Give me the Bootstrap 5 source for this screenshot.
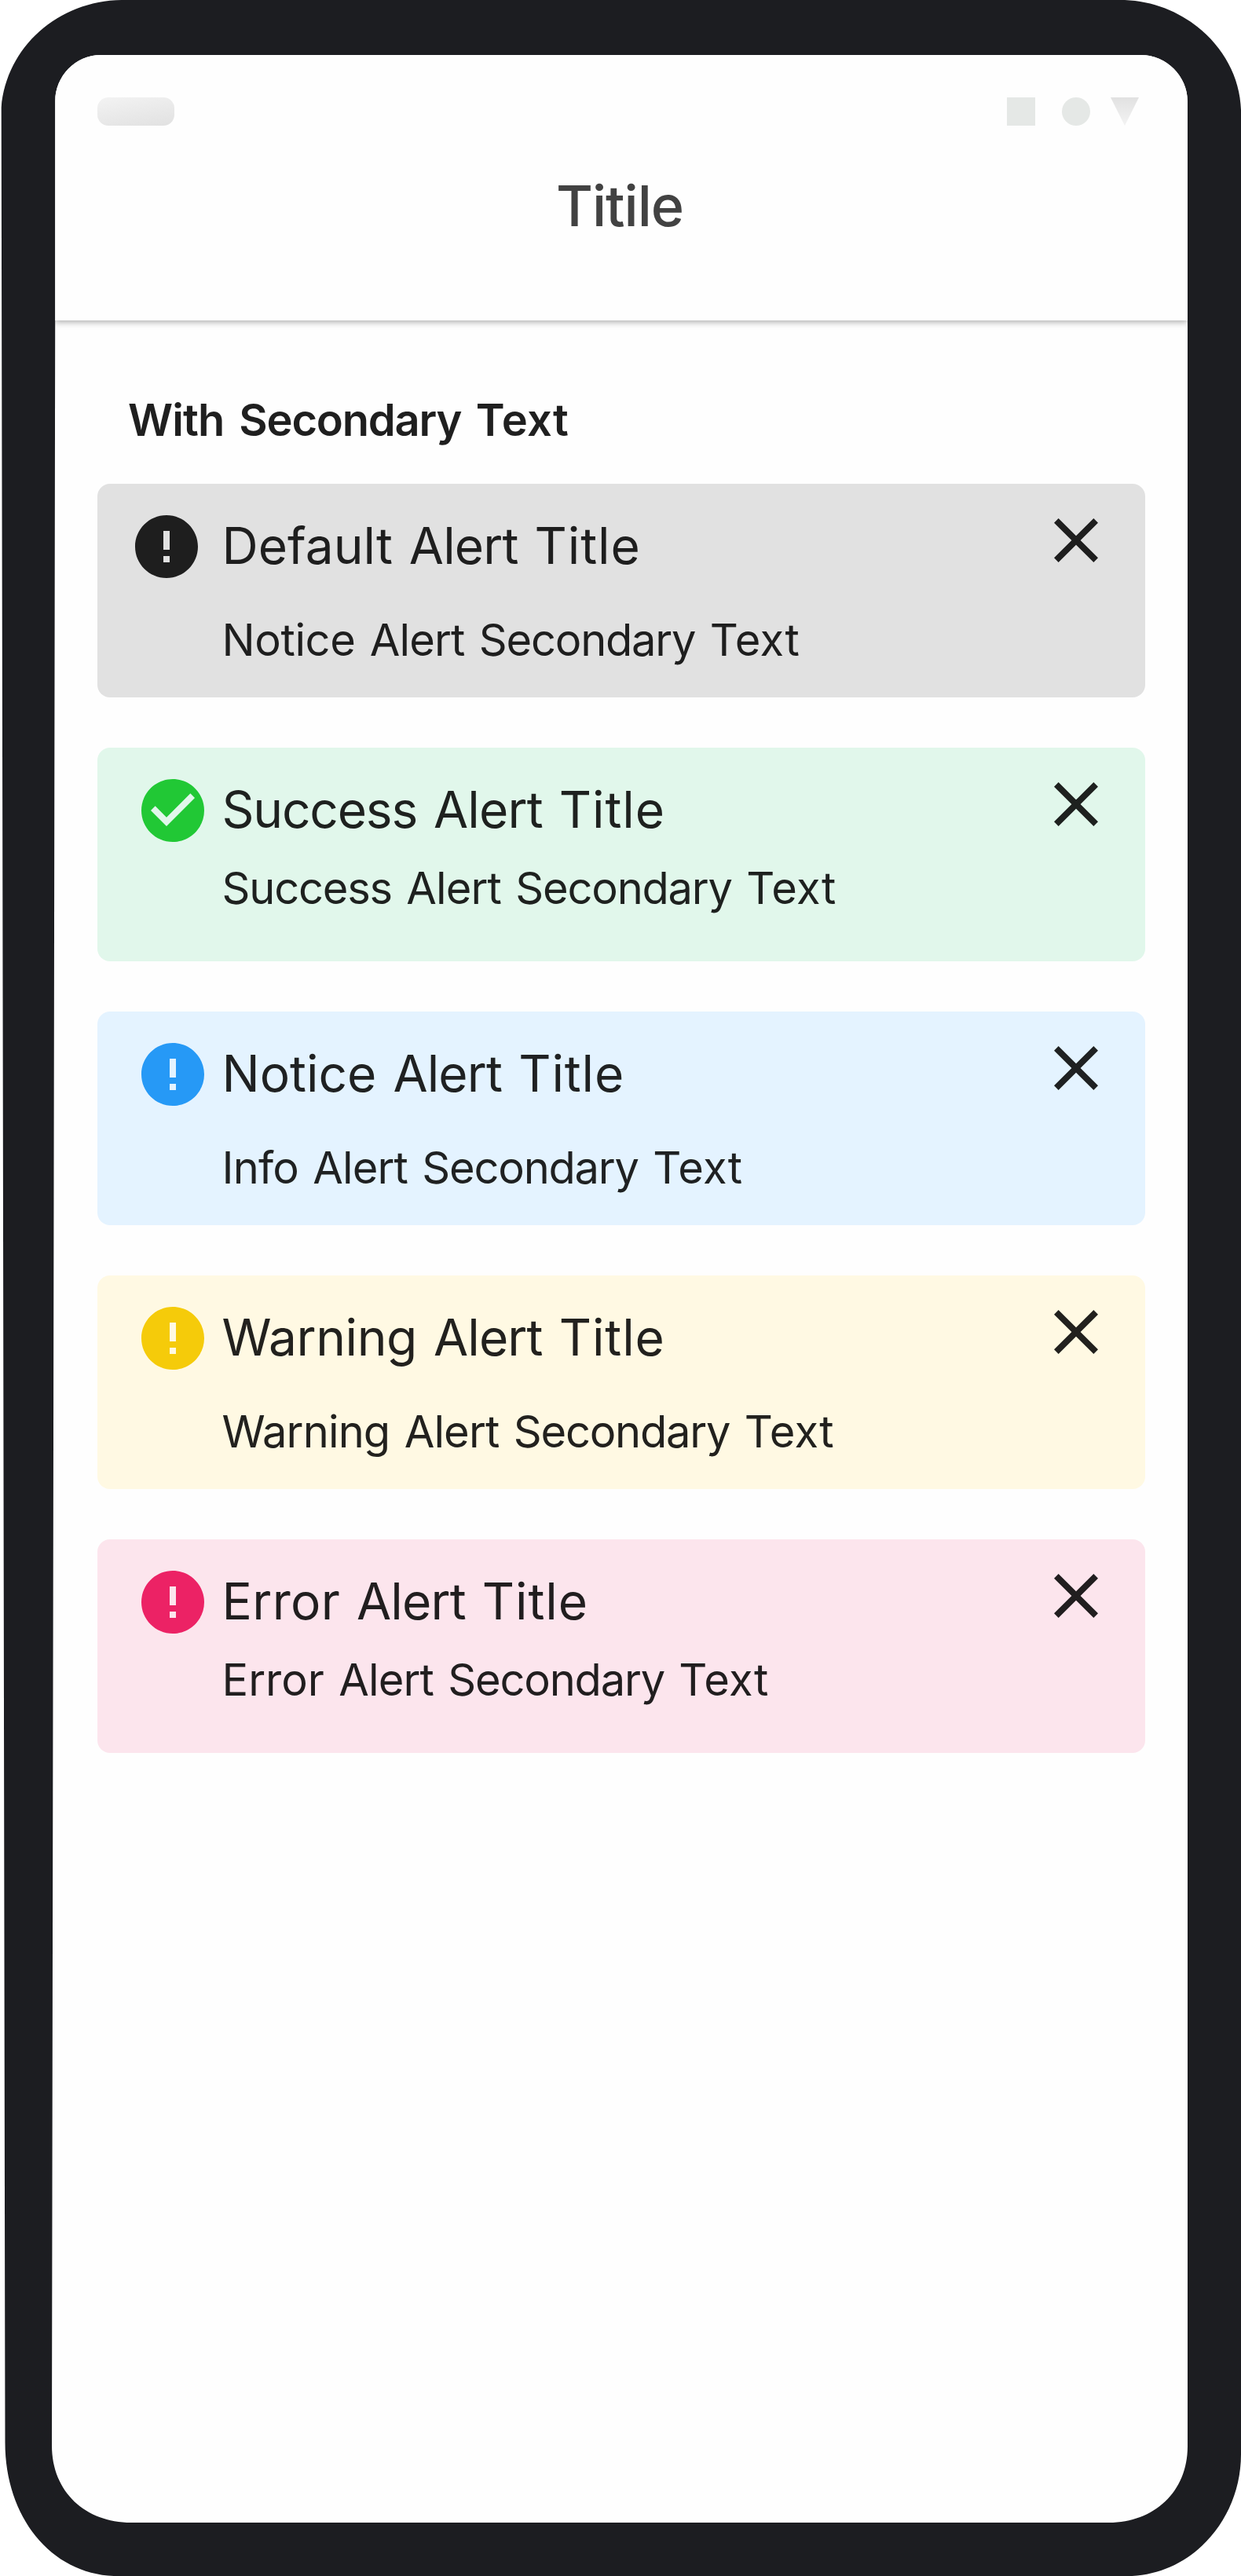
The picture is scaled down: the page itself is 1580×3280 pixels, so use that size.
<!DOCTYPE html>
<html lang="en">
<head>
<meta charset="utf-8">
<meta name="viewport" content="width=device-width, initial-scale=1">
<title>Titile</title>
<link href="https://cdn.jsdelivr.net/npm/bootstrap@5.3.0/dist/css/bootstrap.min.css" rel="stylesheet">
<style>
  body { font-family: Inter, "Liberation Sans", sans-serif; background: #fff; }
  /* device body, its outline leans slightly inwards on the left */
  .device {
    width: 1580px; height: 3280px; padding: 70px 68px 68px 66px; background: #1c1d21;
    clip-path: path("M155 0H1432C1512 3 1578 66 1580 140V3125C1580 3210 1515 3280 1435 3280H145C65 3277 6.500 3205 6.500 3110L1.700 137C8 60 74 1 155 0Z");
  }
  .device-screen {
    background: #fefefe;
    clip-path: path("M62 0H1387C1419 0 1446 27 1446 59V3045C1446 3103 1403 3142 1346 3142H101C43 3142 0 3103 0 3044L4.200 340V59C4.200 27 30 0 62 0Z");
  }
  .app-header {
    height: 338px; margin-left: 4px; padding: 54px 62px 0 54px; background: #fefefe;
    box-shadow: 0 2px 8px rgba(0, 0, 0, .34); z-index: 1;
  }
  .status-pill { width: 98px; height: 36px; border-radius: 14px; background: linear-gradient(170deg, #f3f3f3, #e1e1e1); }
  .app-title { font-size: 72px; font-weight: 500; line-height: 88px; letter-spacing: -1px; color: #424242; margin-top: 58px; padding-left: 4px; }
  .section-title { font-size: 56px; font-weight: 600; line-height: 80px; word-spacing: 4.600px; color: #1f1f1f; margin: 87px 0 41px 39px; }
  .alert-list { padding: 0 54px 0 58px; }
  .alert-stack { gap: 64px; }
  .notice-box {
    --tone: #1e1e1e; --ink: #1e1e1e;
    height: 272px; border: 0; border-radius: 16px; padding: 39px 48px 0 56px; margin: 0; color: var(--ink);
  }
  .notice-icon { width: 80px; height: 80px; margin-top: 1px; fill: var(--tone); }
  .notice-close { width: 80px; height: 80px; padding: 12px; margin-top: -7px; border: 0; background: none; color: inherit; }
  .notice-title, .notice-text { line-height: 80px; white-space: nowrap; }
  .notice-title { font-size: 64px; word-spacing: 3px; }
  .notice-text { font-size: 56px; word-spacing: 2.500px; margin-top: 40px; }
  .notice-text.tight { margin-top: 20px; }
  .notice-copy { margin-left: 22.500px; }
  .tone-default { background: #e1e1e1; padding-left: 48px; }
  .tone-default .notice-copy { margin-left: 30.500px; }
  .tone-success { background: #e1f7eb; --tone: #21c835; --ink: #1e211f; }
  .tone-info { background: #e4f3ff; --tone: #2699f6; --ink: #1f2122; }
  .tone-warning { background: #fff9e3; --tone: #f5cb0a; --ink: #22211e; }
  .tone-error { background: #fce5ed; --tone: #ec2265; --ink: #211e1f; }
  /* tracking per word, from loose to tight */
  .trk-wide { letter-spacing: .9px; } .trk-loose { letter-spacing: .3px; }
  .trk-mid { letter-spacing: -.4px; } .trk-snug { letter-spacing: -.85px; } .trk-tight { letter-spacing: -1.200px; }
</style>
</head>
<body>
<svg class="d-none">
  <symbol id="bang" viewBox="2 2 20 20"><path d="M12 2C6.480 2 2 6.480 2 12s4.480 10 10 10 10-4.480 10-10S17.520 2 12 2zm1 15h-2v-2h2v2zm0-4h-2V7h2v6z"/></symbol>
  <symbol id="tick" viewBox="2 2 20 20"><path d="M12 2C6.480 2 2 6.480 2 12s4.480 10 10 10 10-4.480 10-10S17.520 2 12 2zm-2 15l-5-5 1.410-1.410L10 14.170l7.590-7.590L19 8l-9 9z"/></symbol>
  <symbol id="cross" viewBox="5 5 14 14"><path d="M19 6.410L17.590 5 12 10.590 6.410 5 5 6.410 10.590 12 5 17.590 6.410 19 12 13.410 17.590 19 19 17.590 13.410 12z"/></symbol>
</svg>
<div class="device d-flex">
  <div class="device-screen flex-grow-1 d-flex flex-column">
    <header class="app-header position-relative">
      <div class="d-flex justify-content-between align-items-center">
        <div class="status-pill"></div>
        <svg width="168" height="36" viewBox="0 0 168 36">
          <defs><linearGradient id="tri" x2="0" y2="1"><stop stop-color="#e1e1e1"/><stop offset="1" stop-color="#f3f3f3"/></linearGradient></defs>
          <rect width="36" height="36" fill="#e5e8e6"/><circle cx="88" cy="18" r="18" fill="#e5e8e6"/><path d="M132 0h36l-18 36z" fill="url(#tri)"/>
        </svg>
      </div>
      <h1 class="app-title text-center mb-0">Titile</h1>
    </header>
    <main class="alert-list">
      <h2 class="section-title"><span class="trk-snug">With</span> <span class="trk-tight">Secondary</span> <span class="trk-loose">Text</span></h2>
      <div class="alert-stack d-flex flex-column">
        <div class="alert notice-box tone-default d-flex align-items-start" role="alert">
          <svg class="notice-icon flex-shrink-0"><use href="#bang"/></svg>
          <div class="notice-copy flex-grow-1">
            <div class="notice-title">Default <span class="trk-snug">Alert</span> <span class="trk-wide">Title</span></div>
            <div class="notice-text"><span class="trk-mid">Notice</span> <span class="trk-snug">Alert</span> <span class="trk-tight">Secondary</span> <span class="trk-loose">Text</span></div>
          </div>
          <button type="button" class="notice-close" aria-label="Close"><svg class="d-block" width="56" height="56" fill="currentColor"><use href="#cross"/></svg></button>
        </div>
        <div class="alert notice-box tone-success d-flex align-items-start" role="alert">
          <svg class="notice-icon flex-shrink-0"><use href="#tick"/></svg>
          <div class="notice-copy flex-grow-1">
            <div class="notice-title"><span class="trk-tight">Success</span> <span class="trk-snug">Alert</span> <span class="trk-wide">Title</span></div>
            <div class="notice-text tight"><span class="trk-tight">Success</span> <span class="trk-snug">Alert</span> <span class="trk-tight">Secondary</span> <span class="trk-loose">Text</span></div>
          </div>
          <button type="button" class="notice-close" aria-label="Close"><svg class="d-block" width="56" height="56" fill="currentColor"><use href="#cross"/></svg></button>
        </div>
        <div class="alert notice-box tone-info d-flex align-items-start" role="alert">
          <svg class="notice-icon flex-shrink-0"><use href="#bang"/></svg>
          <div class="notice-copy flex-grow-1">
            <div class="notice-title">Notice <span class="trk-snug">Alert</span> <span class="trk-wide">Title</span></div>
            <div class="notice-text"><span class="trk-snug">Info</span> <span class="trk-snug">Alert</span> <span class="trk-tight">Secondary</span> <span class="trk-loose">Text</span></div>
          </div>
          <button type="button" class="notice-close" aria-label="Close"><svg class="d-block" width="56" height="56" fill="currentColor"><use href="#cross"/></svg></button>
        </div>
        <div class="alert notice-box tone-warning d-flex align-items-start" role="alert">
          <svg class="notice-icon flex-shrink-0"><use href="#bang"/></svg>
          <div class="notice-copy flex-grow-1">
            <div class="notice-title"><span class="trk-mid">Warning</span> <span class="trk-snug">Alert</span> <span class="trk-wide">Title</span></div>
            <div class="notice-text"><span class="trk-snug">Warning</span> <span class="trk-snug">Alert</span> <span class="trk-tight">Secondary</span> <span class="trk-loose">Text</span></div>
          </div>
          <button type="button" class="notice-close" aria-label="Close"><svg class="d-block" width="56" height="56" fill="currentColor"><use href="#cross"/></svg></button>
        </div>
        <div class="alert notice-box tone-error d-flex align-items-start" role="alert">
          <svg class="notice-icon flex-shrink-0"><use href="#bang"/></svg>
          <div class="notice-copy flex-grow-1">
            <div class="notice-title"><span class="trk-loose">Error</span> <span class="trk-snug">Alert</span> <span class="trk-wide">Title</span></div>
            <div class="notice-text tight">Error <span class="trk-snug">Alert</span> <span class="trk-tight">Secondary</span> <span class="trk-loose">Text</span></div>
          </div>
          <button type="button" class="notice-close" aria-label="Close"><svg class="d-block" width="56" height="56" fill="currentColor"><use href="#cross"/></svg></button>
        </div>
      </div>
    </main>
  </div>
</div>
</body>
</html>
